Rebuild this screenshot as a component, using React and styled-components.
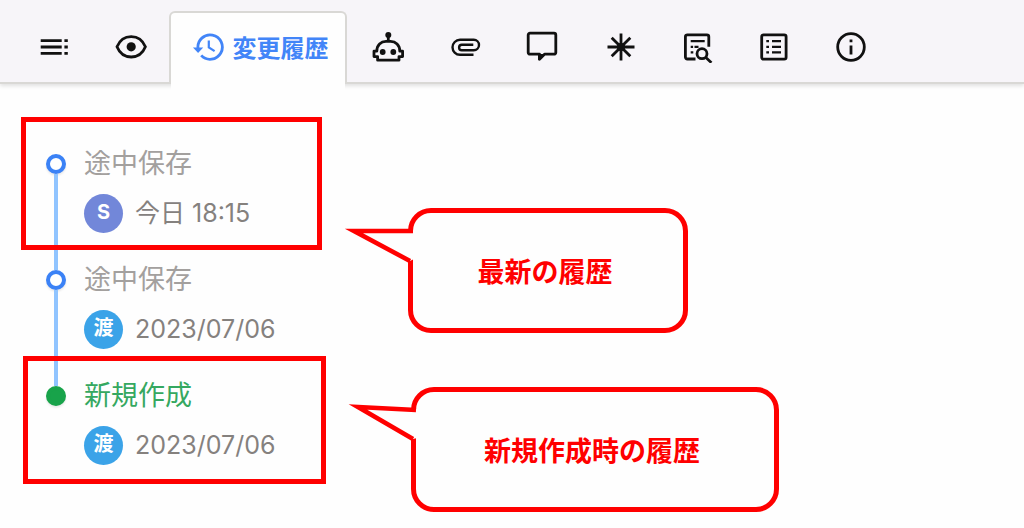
import React from 'react';
import styled, { createGlobalStyle } from 'styled-components';

const GlobalStyle = createGlobalStyle`
  * {
    box-sizing: border-box;
  }

  body {
    margin: 0;
    background: #fefefe;
    font-family: Inter, 'Noto Sans CJK JP', sans-serif;
  }
`;

const Page = styled.div`
  position: relative;
  min-height: 100vh;
  overflow: hidden;
`;

const TabBar = styled.nav`
  display: flex;
  height: 84px;
  padding: 11px 134px 0 15px;
  background: #f7f5f9;
  border-bottom: 2px solid #d9d8d5;
  box-shadow: 0 2px 4px rgba(0, 0, 0, 0.12);
`;

const IconTab = styled.button`
  flex: 1;
  display: flex;
  align-items: center;
  justify-content: center;
  padding: 0;
  border: 0;
  background: none;
  color: #111;
  cursor: pointer;
`;

const ActiveTab = styled.button`
  position: relative;
  flex: none;
  display: flex;
  align-items: center;
  gap: 8px;
  width: 178px;
  margin: 0 2px -2px 0;
  padding: 0 0 4px 21px;
  border: 2px solid #d9d8d5;
  border-bottom: 0;
  border-radius: 6px 6px 0 0;
  background: #fefefe;
  color: #4285f8;
  font: bold 24px/32px 'Noto Sans CJK JP', sans-serif;
  white-space: nowrap;
  cursor: pointer;

  /* hides the bar's shadow under the open tab */
  &::after {
    content: '';
    position: absolute;
    top: 100%;
    left: 0;
    right: 0;
    height: 6px;
    background: #fefefe;
  }
`;

const Svg = styled.svg`
  flex: none;
  width: 32px;
  height: 32px;
  fill: none;
  stroke: currentColor;
  stroke-width: 2.8;

  .solid {
    fill: currentColor;
    stroke: none;
  }
`;

const Timeline = styled.ol`
  margin: 0;
  padding: 60px 46px 0;
  list-style: none;
`;

const Entry = styled.li`
  display: flex;
  gap: 18px;
`;

const Rail = styled.div`
  display: flex;
  flex-direction: column;
  align-items: center;
  width: 20px;
  padding-top: 10px;
  margin-bottom: -10px;
`;

const Marker = styled.span`
  flex: none;
  width: 20px;
  height: 20px;
  border: 4px solid ${props => (props.$created ? '#18a34a' : '#3b82f6')};
  border-radius: 50%;
  background: ${props => (props.$created ? '#18a34a' : '#fff')};
  box-shadow: 0 2px 2px rgba(0, 0, 0, 0.08);
`;

const Line = styled.span`
  flex: 1;
  width: 4px;
  background: #90c4ff;
`;

const Body = styled.div`
  padding-bottom: 27px;
`;

const Title = styled.h3`
  margin: 0 0 11px;
  color: ${props => (props.$created ? '#35a860' : '#a3a09e')};
  font-size: 27px;
  font-weight: 400;
  line-height: 39px;
`;

const Meta = styled.div`
  display: flex;
  align-items: center;
  gap: 12px;
  color: #85817e;
  font-size: 25px;
  line-height: 39px;
`;

const Avatar = styled.span`
  width: 39px;
  height: 39px;
  border-radius: 50%;
  background: ${props => props.$color};
  color: #fff;
  font-size: 20px;
  font-weight: 700;
  line-height: 36px;
  text-align: center;
`;

const Highlight = styled.div`
  position: absolute;
  left: ${props => props.$x}px;
  top: ${props => props.$y}px;
  width: ${props => props.$w}px;
  height: ${props => props.$h}px;
  border: 5px solid #f00;
  pointer-events: none;
`;

const Bubble = styled.div`
  position: absolute;
  left: ${props => props.$x}px;
  top: ${props => props.$y}px;
  display: flex;
  align-items: center;
  justify-content: center;
  width: ${props => props.$w}px;
  height: 125px;
  padding-right: 6px;
  border: 5px solid #f00;
  border-radius: 23px;
  background: #fefefe;
  color: #f00;
  font: bold 27px/36px 'Noto Sans CJK JP', sans-serif;
`;

const Tail = styled.svg`
  position: absolute;
  left: -73px;
  top: 8px;
  width: 76px;
  height: 60px;
  fill: none;
  stroke: #f00;
  stroke-width: 4.6;
  stroke-miterlimit: 10;

  .gap {
    fill: #fefefe;
    stroke: none;
  }
`;

const icons = {
  toc: (
    <g>
      <path d="M2.7 9.7h21M2.7 16h21M2.7 22.3h21" />
      <path d="M26.4 9.7h3.4M26.4 16h3.4M26.4 22.3h3.4" />
    </g>
  ),
  eye: (
    <g>
      <path d="M2 15.8C4.6 9.4 9.8 5.6 16.2 5.6s11.6 3.8 14.2 10.2c-2.6 6.4-7.8 10.2-14.2 10.2S4.6 22.2 2 15.8z" />
      <circle className="solid" cx="16.2" cy="15.8" r="4.6" />
    </g>
  ),
  history: (
    <g>
      <path d="M6 17.5A12.2 12.2 0 1 1 9.2 24.4" />
      <path className="solid" d="M1 16.4h10.2L6.1 22z" />
      <path strokeWidth="2.2" d="M16.8 9.4v7l5.8 3.8" />
    </g>
  ),
  robot: (
    <g>
      <circle className="solid" cx="16.3" cy="4" r="3" />
      <path d="M16.3 5v6" />
      <path strokeLinejoin="round" d="M5.6 29.2v-3.6H2v-5.4h2.8C4.8 14 9 10.4 14 10.4h4.6c5 0 9.2 3.6 9.2 9.8h2.8v5.4H27v3.6z" />
      <circle className="solid" cx="10.7" cy="21" r="2.9" />
      <circle className="solid" cx="21.3" cy="21" r="2.9" />
    </g>
  ),
  clip: (
    <path strokeWidth="2.4" d="M24.5 23.8H11a7.5 7.5 0 0 1 0-15h13.8a5.2 5.2 0 0 1 0 10.4h-12a2.7 2.7 0 0 1 0-5.4h11.5" />
  ),
  chat: (
    <g>
      <path strokeLinejoin="round" d="M4 2.2h24A1.8 1.8 0 0 1 29.8 4v17.4a1.8 1.8 0 0 1-1.8 1.800h-9.500l-5 5v-5H4a1.800 1.800 0 0 1-1.800-1.800V4A1.800 1.800 0 0 1 4 2.200z" />
      <path className="solid" d="M12 23h6.500L12 29.500z" />
    </g>
  ),
  asterisk: (
    <g>
      <path d="M17 2.500v27M3.500 16h27M7.700 6.700l18.600 18.600M26.300 6.700L7.700 25.300" />
      <circle className="solid" cx="17" cy="16" r="4" />
    </g>
  ),
  tableSearch: (
    <g>
      <path d="M14.500 28H6.300a1.900 1.900 0 0 1-1.900-1.900V5.700a1.900 1.900 0 0 1 1.900-1.900h19.600a1.900 1.900 0 0 1 1.900 1.900v10" />
      <path strokeWidth="2.200" d="M9.700 10.200h14M9.700 15.800h2.400M13.500 15.800h4M9.700 21.400h2.600" />
      <circle cx="21" cy="22.700" r="5" />
      <path d="M24.600 26.300l5.800 5.400" />
    </g>
  ),
  list: (
    <g>
      <rect x="3.700" y="3.800" width="24.400" height="24.400" rx="1.900" />
      <path strokeWidth="2.200" d="M8.300 10.200h2.700M14 10.200h9M8.300 15.800h2.700M14 15.800h9M8.300 21.400h2.700M14 21.400h9" />
    </g>
  ),
  info: (
    <g>
      <circle cx="16" cy="16" r="13.300" />
      <path d="M16 8.500v2.800M16 14.500v9" />
    </g>
  ),
};

const Icon = ({ name }) => (
  <Svg viewBox="0 0 32 32" aria-hidden="true">{icons[name]}</Svg>
);

const leftTabs = [
  { icon: 'toc', label: '目次' },
  { icon: 'eye', label: 'プレビュー' },
];

const rightTabs = [
  { icon: 'robot', label: 'アシスタント' },
  { icon: 'clip', label: '添付ファイル' },
  { icon: 'chat', label: 'コメント' },
  { icon: 'asterisk', label: '注釈' },
  { icon: 'tableSearch', label: '検索' },
  { icon: 'list', label: '一覧' },
  { icon: 'info', label: '情報' },
];

const entries = [
  { title: '途中保存', user: 'S', color: '#7287d9', date: '今日 18:15' },
  { title: '途中保存', user: '渡', color: '#3ba3e8', date: '2023/07/06' },
  { title: '新規作成', user: '渡', color: '#3ba3e8', date: '2023/07/06', created: true },
];

const renderTab = item => (
  <IconTab key={item.icon} type="button" aria-label={item.label}>
    <Icon name={item.icon} />
  </IconTab>
);

const Callout = ({ x, y, width, tail, children }) => (
  <Bubble $x={x} $y={y} $w={width}>
    <Tail viewBox="0 0 76 60" aria-hidden="true">
      <path className="gap" d={`M${tail}L74 38V10z`} />
      <path d={`M${tail}`} />
    </Tail>
    {children}
  </Bubble>
);

const App = () => {
  return (
    <Page>
      <GlobalStyle />
      <TabBar>
        {leftTabs.map(renderTab)}
        <ActiveTab type="button" aria-current="page">
          <Icon name="history" />
          変更履歴
        </ActiveTab>
        {rightTabs.map(renderTab)}
      </TabBar>
      <Timeline>
        {entries.map((entry, index) => (
          <Entry key={index}>
            <Rail>
              <Marker $created={entry.created} />
              {index < entries.length - 1 && <Line />}
            </Rail>
            <Body>
              <Title $created={entry.created}>{entry.title}</Title>
              <Meta>
                <Avatar $color={entry.color}>{entry.user}</Avatar>
                <time>{entry.date}</time>
              </Meta>
            </Body>
          </Entry>
        ))}
      </Timeline>
      <Highlight $x={21} $y={117} $w={301} $h={133} />
      <Highlight $x={23} $y={356} $w={303} $h={128} />
      <Callout x={408} y={208} width={280} tail="73 10H14L70 40">最新の履歴</Callout>
      <Callout x={411} y={387} width={368} tail="73 10L15 7L70 39">新規作成時の履歴</Callout>
    </Page>
  )
}

export default App;
